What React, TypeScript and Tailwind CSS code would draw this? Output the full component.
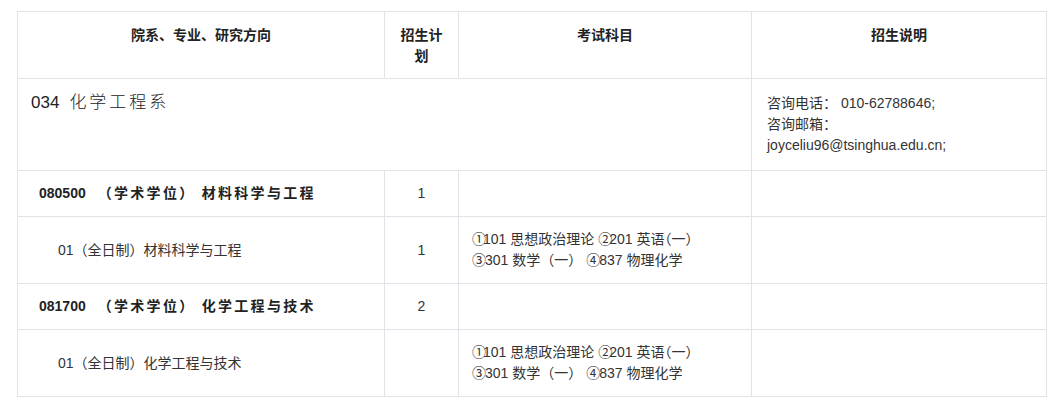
const font = { fontFamily: '"Liberation Sans", "Noto Sans CJK SC", sans-serif' };

type Row = {
  name: string;
  code?: string;
  level: "major" | "dir";
  plan: string;
  exam?: boolean;
};

const rows: Row[] = [
  { code: "080500", name: "（学术学位） 材料科学与工程", level: "major", plan: "1" },
  { name: "01（全日制）材料科学与工程", level: "dir", plan: "1", exam: true },
  { code: "081700", name: "（学术学位） 化学工程与技术", level: "major", plan: "2" },
  { name: "01（全日制）化学工程与技术", level: "dir", plan: "", exam: true },
];

const cell = "border border-[#e1e3e8] align-middle";

function Exam() {
  return (
    <div>
      <div className="whitespace-pre">
        <span className="tracking-[-3px]">①</span>101 思想政治理论 <span className="tracking-[-3px]">②</span>201 英语
        <span className="[font-feature-settings:'halt']">（一）</span>
      </div>
      <div className="whitespace-pre">
        <span className="tracking-[-1px]">③</span>301 数学（一） <span className="tracking-[-1px]">④</span>837 物理化学
      </div>
    </div>
  );
}

export default function App() {
  return (
    <div className="min-h-[406px] w-[1053px] bg-white pl-[17px] pt-[11px] text-[#333]" style={font}>
      <table className="w-[1029px] table-fixed border-collapse">
        <colgroup>
          <col className="w-[367px]" />
          <col className="w-[74px]" />
          <col className="w-[293px]" />
          <col className="w-[295px]" />
        </colgroup>
        <thead>
          <tr className="h-[67px] text-[14px] font-bold leading-[21px] text-[#222]">
            <th className={`${cell} !align-top px-[14px] pt-[13px]`}>院系、专业、研究方向</th>
            <th className={`${cell} !align-top px-[14px] pt-[13px]`}>招生计划</th>
            <th className={`${cell} !align-top px-[14px] pt-[13px]`}>考试科目</th>
            <th className={`${cell} !align-top px-[14px] pt-[13px]`}>招生说明</th>
          </tr>
        </thead>
        <tbody>
          <tr className="h-[92px]">
            <td colSpan={3} className={`${cell} !align-top pl-[13px] pt-[12px]`}>
              <span className="text-[17px] leading-[24px] text-[#222]">034</span>
              <span className="ml-[10px] text-[17px] font-light leading-[24px] tracking-[3px] text-[#222]">
                化学工程系
              </span>
            </td>
            <td className={`${cell} pl-[15px] text-[14px] leading-[21px]`}>
              <div>咨询电话： 010-62788646;</div>
              <div>咨询邮箱：</div>
              <div>joyceliu96@tsinghua.edu.cn;</div>
            </td>
          </tr>
          {rows.map((r, i) => (
            <tr key={i} className={r.level === "major" ? "h-[46px]" : "h-[67px]"}>
              {r.level === "major" ? (
                <td className={`${cell} pl-[21px] text-[14px] text-[#222]`}>
                  <span className="font-bold">{r.code}</span>
                  <span className="ml-[12px] font-bold tracking-[2.3px]">{r.name}</span>
                </td>
              ) : (
                <td className={`${cell} pl-[40px] text-[14px]`}>{r.name}</td>
              )}
              <td className={`${cell} text-center text-[14px]`}>{r.plan}</td>
              <td className={`${cell} pl-[13px] text-[14px] leading-[21px]`}>{r.exam ? <Exam /> : null}</td>
              <td className={cell}></td>
            </tr>
          ))}
        </tbody>
      </table>
    </div>
  );
}
